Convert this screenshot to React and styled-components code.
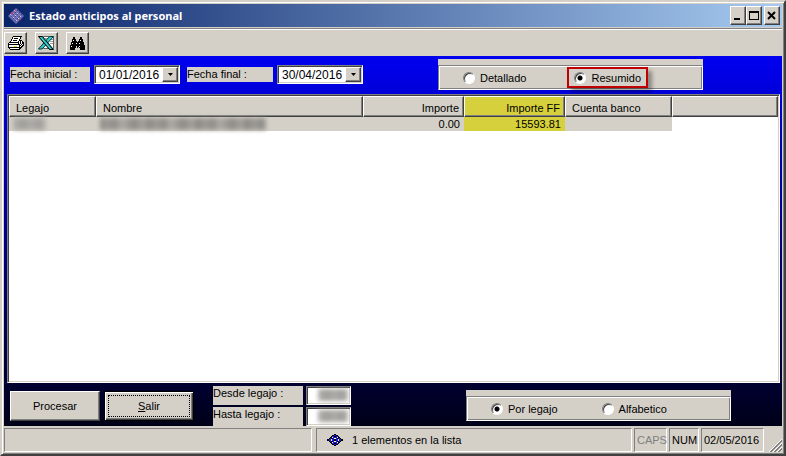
import React, { useState } from "react";
import styled, { createGlobalStyle, css } from "styled-components";

const COLUMNS = [
  { key: "legajo", title: "Legajo", width: 87 },
  { key: "nombre", title: "Nombre", width: 267 },
  { key: "importe", title: "Importe", width: 101, right: true },
  { key: "importeFF", title: "Importe FF", width: 101, right: true, mark: true },
  { key: "banco", title: "Cuenta banco", width: 107 },
];

const ROWS = [{ id: 1, importe: "0.00", importeFF: "15593.81", banco: "" }];

const COLORS = {
  k: "#000000",
  w: "#ffffff",
  g: "#808080",
  s: "#c0c0c0",
  y: "#e6e600",
  b: "#1818e0",
};

const PRINTER = [
  ".....kkkkkkkkk..",
  "....kwwwwwwwk...",
  "....kwkkkkwwk...",
  "...kwwwwwwwk....",
  "...kwkkkkwwkkk..",
  "..kwwwwwwwkwkwk.",
  ".kkkkkkkkkkwkwkk",
  "kwwwwwwwwwkwkwkk",
  "kkkkkkkkkkkkwkwk",
  "kwwwwwwwwwwkkwkk",
  "kwwwwwyyywwkwkk.",
  "kkkkkkkkkkkkkk..",
  ".kwwwwwwwwwkk...",
  "..kkkkkkkkkk....",
];

const BINOCULARS = [
  "...kk.....kk...",
  "...kk.....kk...",
  "..kkkk...kkkk..",
  "..kwkk...kwkk..",
  "..kkkkk.kkkkk..",
  ".kkkkkkkkkkkkk.",
  ".kwkkkwkkwkkkk.",
  ".kkkkkkkkkkkkk.",
  "kkkkkkkkkkkkkkk",
  "kwkkkk.kkwkkkkk",
  "kkkkkk.k.kkkkkk",
  "kkkkk.....kkkkk",
  "kkkkk.....kkkkk",
];

const DIAMOND = [
  ".......kk.......",
  ".....kkbbkk.....",
  "....kbbkkbbk....",
  "...kkwbbbbwkk...",
  "..kbkkbwwbkkbk..",
  "kkbbwbbkkbbwbbkk",
  "kkbbwbbkkbbwbbkk",
  "..kbkkbwwbkkbk..",
  "...kkwbbbbwkk...",
  "....kbbkkbbk....",
  ".....kkbbkk.....",
  ".......kk.......",
];

const PixelIcon = ({ map }) => (
  <svg width={map[0].length} height={map.length} shapeRendering="crispEdges" aria-hidden="true">
    {map.map((line, y) =>
      line.split("").map((c, x) =>
        c === "." ? null : <rect key={`${x}-${y}`} x={x} y={y} width="1" height="1" fill={COLORS[c]} />
      )
    )}
  </svg>
);

const ExcelIcon = () => (
  <svg width="17" height="14" viewBox="0 0 17 14" aria-hidden="true">
    <path d="M5.5.5h10v12h-10z" fill="#fff" stroke="#606060" />
    <path d="M12 5.5h3M12 7.500h3M12 3.500h3M7 2.500h3" stroke="#a0a0a0" />
    <path d="M11.500.500h4L4 13H.500z" fill="#30d0d0" stroke="#003838" strokeWidth="1" />
    <path d="M.5.500H4.500L15.500 13.500H11.500z" fill="#109898" stroke="#000" strokeWidth="1" />
    <path d="M2.500 1L12.500 12.500" stroke="#50f0f0" strokeWidth="1" />
  </svg>
);

const AppIcon = () => (
  <svg width="16" height="16" viewBox="0 0 16 16" aria-hidden="true">
    <path d="M8 0 L16 8 L8 16 L0 8 Z" fill="#6c6cb4" />
    <path d="M6 2 L14 10 M4 4 L12 12 M2 6 L10 14" stroke="#c4c2e4" strokeWidth="1" strokeDasharray="2 2" />
    <path d="M10 2 L2 10 M12 4 L4 12 M14 6 L6 14" stroke="#34347c" strokeWidth="1" strokeDasharray="1 2" />
    <path d="M3 4h2v2h-2z M11 11h2v1h-2z M7 2h1v1h-1z" fill="#d03a5c" />
  </svg>
);

const DateField = ({ id, value, onChange }) => (
  <DateBox>
    <DateInput id={id} value={value} onChange={({ target }) => onChange(target.value)} />
    <DropButton type="button" aria-label="Abrir calendario">
      <svg width="5" height="3" aria-hidden="true"><path d="M0 0h5L2.5 3z" fill="#000" /></svg>
    </DropButton>
  </DateBox>
);

const RadioItem = ({ name, label, checked, onChange, framed }) => (
  <RadioLabel $framed={framed}>
    <Radio type="radio" name={name} checked={checked} onChange={onChange} />
    {label}
  </RadioLabel>
);

const App = () => {
  const [desde, setDesde] = useState("01/01/2016");
  const [hasta, setHasta] = useState("30/04/2016");
  const [modo, setModo] = useState("resumido");
  const [orden, setOrden] = useState("legajo");

  return (
    <Window>
      <GlobalStyle />
      <TitleBar>
        <AppIcon />
        <Title>Estado anticipos al personal</Title>
        <Caption type="button" aria-label="Minimizar">
          <svg width="10" height="10" aria-hidden="true"><path d="M1 7h6v2H1z" /></svg>
        </Caption>
        <Caption type="button" aria-label="Maximizar">
          <svg width="10" height="10" aria-hidden="true"><path fillRule="evenodd" d="M0 0h10v9H0z M1 2v6h8V2z" /></svg>
        </Caption>
        <Caption type="button" aria-label="Cerrar" $apart>
          <svg width="10" height="10" aria-hidden="true"><path d="M1 1L8 8M8 1L1 8" stroke="#000" strokeWidth="2" /></svg>
        </Caption>
      </TitleBar>

      <Toolbar>
        <ToolButton type="button" aria-label="Imprimir"><PixelIcon map={PRINTER} /></ToolButton>
        <ToolButton type="button" aria-label="Excel"><ExcelIcon /></ToolButton>
        <ToolButton type="button" aria-label="Buscar"><PixelIcon map={BINOCULARS} /></ToolButton>
      </Toolbar>

      <Body>
        <Filters>
          <Label htmlFor="fecha-inicial" $width={80}>Fecha inicial :</Label>
          <DateField id="fecha-inicial" value={desde} onChange={setDesde} />
          <Label htmlFor="fecha-final" $width={86} $apart>Fecha final :</Label>
          <DateField id="fecha-final" value={hasta} onChange={setHasta} />
          <GroupBox $left={75}>
            <Group $gap={41} role="radiogroup" aria-label="Modo">
              <RadioItem
                name="modo"
                label="Detallado"
                checked={modo === "detallado"}
                onChange={() => setModo("detallado")}
              />
              <RadioItem
                name="modo"
                label="Resumido"
                framed
                checked={modo === "resumido"}
                onChange={() => setModo("resumido")}
              />
            </Group>
          </GroupBox>
        </Filters>

        <ListView>
          <Table>
            <colgroup>
              {COLUMNS.map(({ key, width }) => <Col key={key} $width={width} />)}
              <col />
            </colgroup>
            <thead>
              <tr>
                {COLUMNS.map(({ key, title, right, mark }) => (
                  <HeadCell key={key} $right={right} $mark={mark}>{title}</HeadCell>
                ))}
                <HeadCell as="td" />
              </tr>
            </thead>
            <tbody>
              {ROWS.map((row) => (
                <tr key={row.id}>
                  {COLUMNS.map(({ key, right, mark }) => (
                    <Cell key={key} $right={right} $mark={mark}>
                      {key === "legajo" && <Hidden $width={33} />}
                      {key === "nombre" && <Hidden $width={166} $dark />}
                      {row[key]}
                    </Cell>
                  ))}
                  <td />
                </tr>
              ))}
            </tbody>
          </Table>
        </ListView>

        <Actions>
          <PushButton type="button">Procesar</PushButton>
          <PushButton type="button" $focused><span><u>S</u>alir</span></PushButton>
          <Range>
            <RangeLabel htmlFor="desde-legajo">Desde legajo :</RangeLabel>
            <RangeField><RangeInput id="desde-legajo" /><Hidden $width={30} /></RangeField>
            <RangeLabel htmlFor="hasta-legajo">Hasta legajo :</RangeLabel>
            <RangeField><RangeInput id="hasta-legajo" /><Hidden $width={30} /></RangeField>
          </Range>
          <GroupBox $left={115}>
            <Group $gap={44} role="radiogroup" aria-label="Orden">
              <RadioItem
                name="orden"
                label="Por legajo"
                checked={orden === "legajo"}
                onChange={() => setOrden("legajo")}
              />
              <RadioItem
                name="orden"
                label="Alfabetico"
                checked={orden === "alfabetico"}
                onChange={() => setOrden("alfabetico")}
              />
            </Group>
          </GroupBox>
        </Actions>
      </Body>

      <StatusBar>
        <Panel $grow />
        <Panel $grow $message>
          <PixelIcon map={DIAMOND} />
          1 elementos en la lista
        </Panel>
        <Panel $width={33} $off>CAPS</Panel>
        <Panel $width={30}>NUM</Panel>
        <Panel $width={63}>02/05/2016</Panel>
        <Grip>
          <svg width="13" height="13" aria-hidden="true">
            <path d="M0 13L13 0M4 13L13 4M8 13L13 8" stroke="#fff" />
            <path d="M1 13L13 1M2 13L13 2M5 13L13 5M6 13L13 6M9 13L13 9M10 13L13 10" stroke="#808080" />
          </svg>
        </Grip>
      </StatusBar>
    </Window>
  );
};

const GlobalStyle = createGlobalStyle`
  * {
    box-sizing: border-box;
  }
  body {
    margin: 0;
    background: #d4d0c8;
  }
  button, input {
    font: inherit;
    color: inherit;
    border-radius: 0;
  }
`;

const raised = css`
  border: 1px solid;
  border-color: #fff #404040 #404040 #fff;
  box-shadow: inset -1px -1px 0 #808080;
  background: #d4d0c8;
`;

const sunken = css`
  border: 1px solid;
  border-color: #808080 #fff #fff #808080;
  box-shadow: inset 1px 1px 0 #404040, inset -1px -1px 0 #d4d0c8;
  background: #fff;
`;

const Window = styled.div`
  display: flex;
  flex-direction: column;
  min-height: 100vh;
  padding: 2px;
  border: 2px solid;
  border-color: #d4d0c8 #404040 #404040 #d4d0c8;
  box-shadow: inset 1px 1px 0 #fff, inset -1px -1px 0 #808080;
  background: #d4d0c8;
  color: #000;
  font-family: "Liberation Sans", Arial, sans-serif;
  font-size: 11px;
  line-height: 14px;
`;

const TitleBar = styled.header`
  display: flex;
  align-items: center;
  height: 23px;
  padding: 0 2px 0 4px;
  background: linear-gradient(to right, #0a246a, #a6caf0);
`;

const Title = styled.h1`
  flex: 1;
  margin: 0 0 0 5px;
  color: #fff;
  font-family: "Noto Sans", "Open Sans", sans-serif;
  font-size: 11px;
  font-weight: bold;
`;

const Caption = styled.button`
  ${raised}
  display: flex;
  align-items: center;
  justify-content: center;
  width: 16px;
  height: 19px;
  padding: 0;
  margin-left: ${({ $apart }) => ($apart ? "2px" : "0")};
`;

const Toolbar = styled.div`
  display: flex;
  gap: 8px;
  height: 28px;
  margin-top: 1px;
  padding-top: 3px;
  border-top: 1px solid #808080;
  box-shadow: inset 0 1px 0 #fff;
`;

const ToolButton = styled.button`
  ${raised}
  display: flex;
  align-items: center;
  justify-content: center;
  width: 23px;
  height: 22px;
  padding: 0;
`;

const Body = styled.main`
  display: flex;
  flex: 1;
  flex-direction: column;
  padding: 3px 2px 0 3px;
  background: linear-gradient(#0000f0, #000018);
`;

const Filters = styled.div`
  display: flex;
  align-items: center;
  height: 31px;
  padding-left: 3px;
`;

const Label = styled.label`
  width: ${({ $width }) => $width}px;
  height: 15px;
  margin: 0 4px 0 ${({ $apart }) => ($apart ? "7px" : "0")};
  background: #d4d0c8;
`;

const DateBox = styled.div`
  ${sunken}
  display: flex;
  width: 86px;
  height: 19px;
  padding: 1px;
`;

const DateInput = styled.input`
  flex: 1;
  min-width: 0;
  padding: 0 0 0 3px;
  border: 0;
  outline: 0;
  background: #fff;
  font-size: 12px;
`;

const DropButton = styled.button`
  ${raised}
  display: flex;
  align-items: center;
  justify-content: center;
  width: 16px;
  padding: 0;
`;

const GroupBox = styled.div`
  width: 265px;
  height: 31px;
  margin-left: ${({ $left }) => $left}px;
  padding-top: 6px;
  background: #d4d0c8;
`;

const Group = styled.div`
  display: flex;
  align-items: center;
  gap: ${({ $gap }) => $gap}px;
  height: 25px;
  padding-left: 24px;
  border: 1px solid;
  border-color: #808080 #fff #fff #808080;
  box-shadow: inset 1px 1px 0 #fff, inset -1px -1px 0 #808080;
`;

const RadioLabel = styled.label`
  display: flex;
  align-items: center;
  gap: 5px;

  ${({ $framed }) => $framed && css`
    height: 21px;
    padding: 0 5px;
    border: 2px solid #c00000;
    box-shadow: 4px 4px 4px rgba(0, 0, 0, 0.35);
  `}
`;

const Radio = styled.input`
  appearance: none;
  width: 12px;
  height: 12px;
  margin: 0;
  border: 1px solid;
  border-color: #808080 #fff #fff #808080;
  border-radius: 50%;
  background: #fff;
  box-shadow: inset 1px 1px 0 #404040;

  &:checked {
    background: radial-gradient(circle, #000 2px, #fff 3px);
  }
`;

const ListView = styled.div`
  ${sunken}
  flex: 1;
  margin-top: 4px;
  padding: 1px;
`;

const Table = styled.table`
  width: 100%;
  table-layout: fixed;
  border-collapse: separate;
  border-spacing: 0;
`;

const Col = styled.col`
  width: ${({ $width }) => $width}px;
`;

const HeadCell = styled.th`
  ${raised}
  height: 21px;
  padding: 2px 4px 0 6px;
  background: ${({ $mark }) => ($mark ? "#d6d03c" : "#d4d0c8")};
  font-weight: normal;
  text-align: ${({ $right }) => ($right ? "right" : "left")};
`;

const Cell = styled.td`
  height: 14px;
  padding: 0 4px;
  background: ${({ $mark }) => ($mark ? "#d6d03c" : "#d4d0c8")};
  text-align: ${({ $right }) => ($right ? "right" : "left")};
`;

const Hidden = styled.span`
  display: block;
  width: ${({ $width }) => $width}px;
  height: 12px;
  background: ${({ $dark }) =>
    $dark
      ? "repeating-linear-gradient(90deg, #8c8a86, #9e9b96 7px, #908e89 15px, #aeaba5 22px, #8e8c88 34px, #a5a29d 43px, #8c8a86 49px)"
      : "linear-gradient(90deg, #b4b2ae, #a09e9a 30%, #aeaca8 55%, #a09e9a 80%, #b8b6b2)"};
  filter: blur(2px);
`;

const Actions = styled.div`
  display: flex;
  align-items: center;
  height: 43px;
  padding: 2px 0 0 3px;
`;

const PushButton = styled.button`
  ${raised}
  width: 90px;
  height: 30px;
  margin-right: 4px;
  padding: 2px;

  ${({ $focused }) => $focused && css`
    border-color: #000;
    box-shadow: inset 1px 1px 0 #fff, inset -1px -1px 0 #404040, inset -2px -2px 0 #808080;

    span {
      display: flex;
      align-items: center;
      justify-content: center;
      height: 22px;
      margin: 0 1px;
      border: 1px dotted #000;
    }
  `}
`;

const Range = styled.div`
  display: grid;
  grid-template-columns: 90px 45px;
  grid-auto-rows: 19px;
  gap: 2px 3px;
  margin-left: 15px;
`;

const RangeLabel = styled.label`
  background: #d4d0c8;
`;

const RangeField = styled.div`
  ${sunken}
  display: flex;
  align-items: center;
  padding: 2px;
  overflow: hidden;
`;

const RangeInput = styled.input`
  flex: 1;
  min-width: 0;
  padding: 0;
  border: 0;
  outline: 0;
`;

const StatusBar = styled.footer`
  display: flex;
  gap: 2px;
  padding-top: 2px;
`;

const Panel = styled.div`
  display: flex;
  align-items: center;
  flex: ${({ $grow }) => ($grow ? "1 1 0" : "none")};
  width: ${({ $width }) => ($width ? `${$width}px` : "auto")};
  height: 24px;
  padding-left: 2px;
  border: 1px solid;
  border-color: #808080 #fff #fff #808080;
  color: ${({ $off }) => ($off ? "#808080" : "#000")};

  ${({ $message }) => $message && css`
    gap: 9px;
    margin-left: 2px;
    padding-left: 10px;
  `}
`;

const Grip = styled.div`
  display: flex;
  flex: none;
  align-items: flex-end;
  justify-content: flex-end;
  width: 16px;
`;

export default App;
